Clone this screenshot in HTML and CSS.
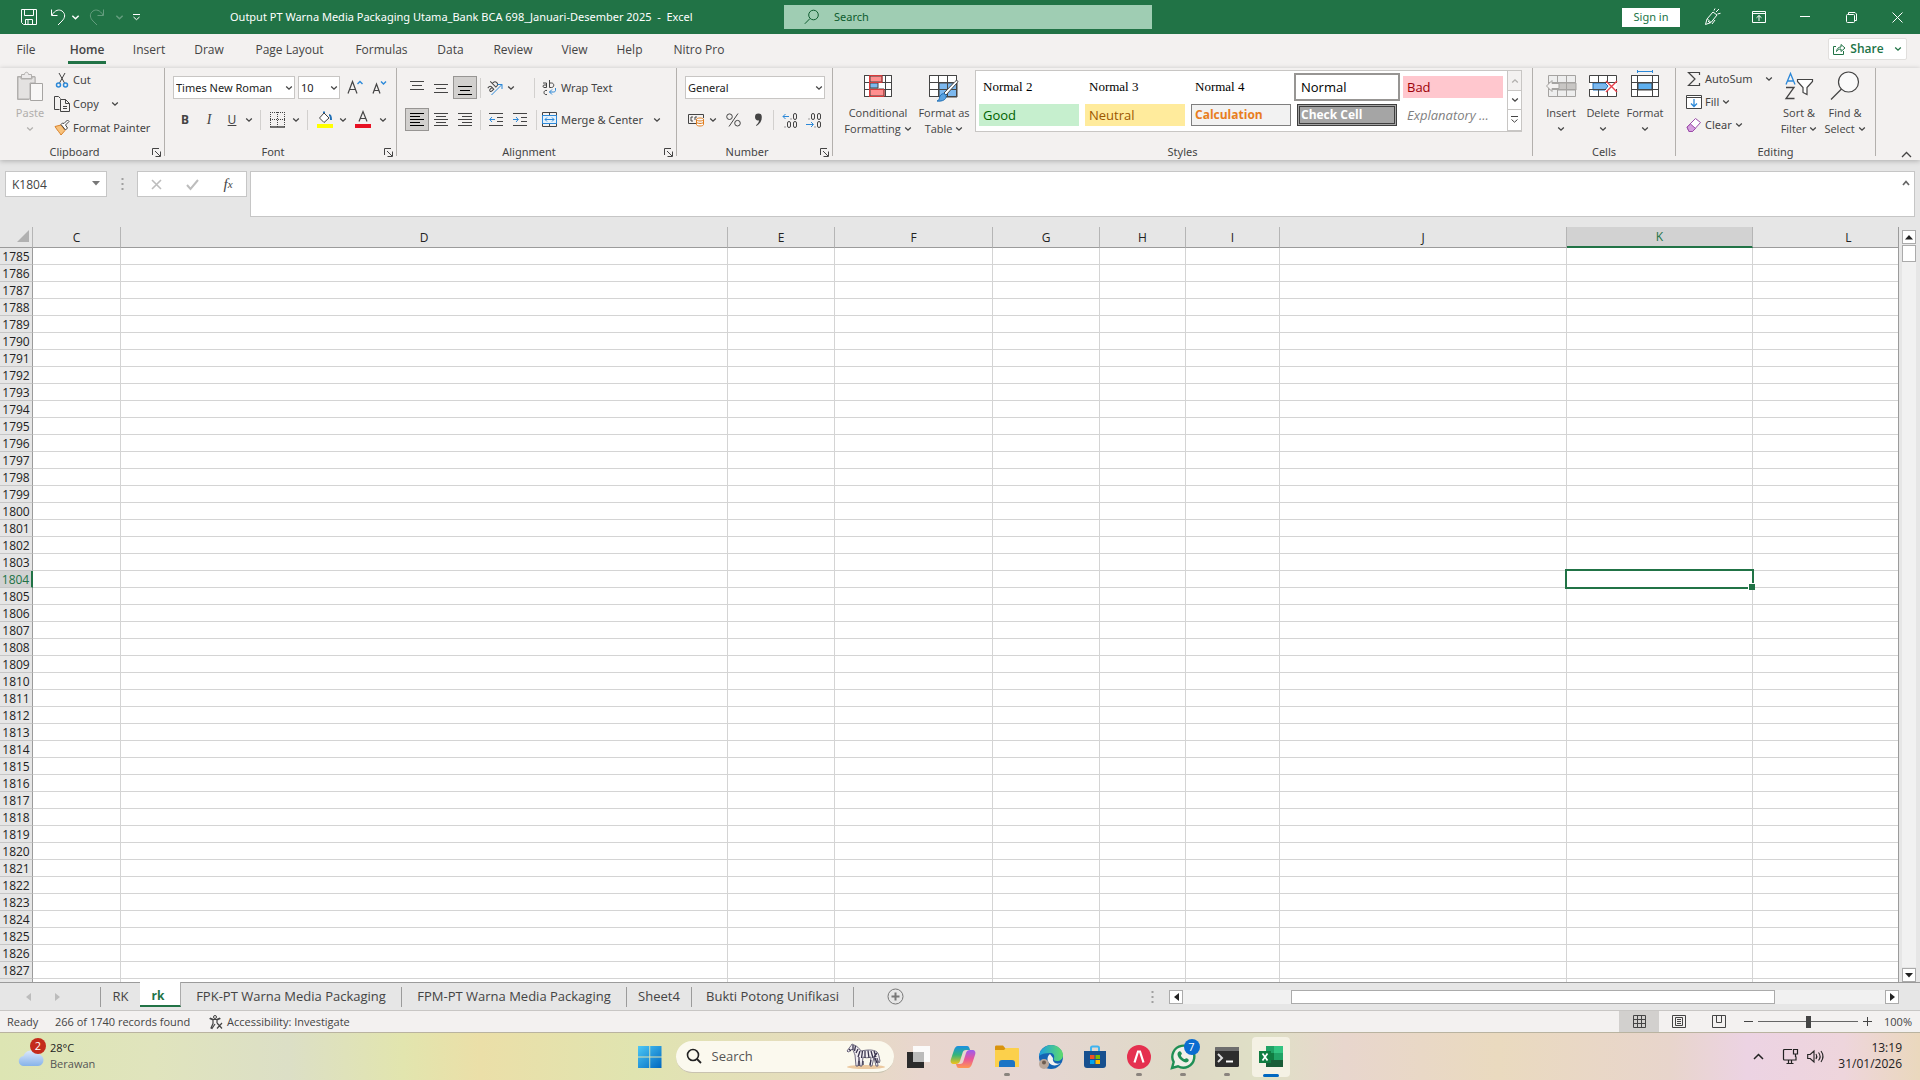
FILE: index.html
```html
<!DOCTYPE html>
<html lang="en">
<head>
  <meta charset="UTF-8" />
  <meta name="viewport" content="width=device-width, initial-scale=1.0"/>
  <title>Output PT Warna Media Packaging Utama - Excel</title>
  <link rel="stylesheet" href="styles.css">
</head>
<body>
  <svg class="defs" aria-hidden="true">
    <symbol id="chev" viewBox="0 0 8 8"><path d="M1.2 2.5 4 5.2 6.8 2.5" fill="none" stroke="currentColor" stroke-width="1.3"/></symbol>
    <symbol id="launch" viewBox="0 0 9 9"><path d="M.5 7V.5H7M3 3l5 5M8.500 3.500v5h-5" fill="none" stroke="currentColor"/></symbol>
  </svg>

  <header class="titlebar">
    <div class="title-left">
      <div class="quick">
        <button class="w34" aria-label="Save"><svg width="18" height="18" viewBox="0 0 18 18"><path d="M1.500 1.500h15v15H3.500l-2-2zM4.500 1.500v6h9v-6M5.500 16.500v-5h7v5M8 12v4"/></svg></button>
        <button class="w24" aria-label="Undo"><svg width="16" height="18" viewBox="0 0 16 18"><path d="M1.500 1.500v6h6M2 7C5 2 9 1 12 3c4 3 3 7 0 10l-4 4"/></svg></button>
        <button class="w10" aria-label="Undo list"><svg width="9" height="9"><use href="#chev"/></svg></button>
        <button class="w34 faded" aria-label="Redo"><svg width="16" height="18" viewBox="0 0 16 18"><path d="M14.500 1.500v6h-6M14 7C11 2 7 1 4 3c-4 3-3 7 0 10l4 4"/></svg></button>
        <button class="w10 faded" aria-label="Redo list"><svg width="9" height="9"><use href="#chev"/></svg></button>
        <button class="w24" aria-label="Customize toolbar"><svg width="9" height="8" viewBox="0 0 9 8"><path d="M1 1.500h7M1.500 4l3 2.700L7.500 4"/></svg></button>
      </div>
      <h1>Output PT Warna Media Packaging Utama_Bank BCA 698_Januari-Desember 2025&nbsp; -&nbsp; Excel</h1>
    </div>
    <label class="title-search">
      <svg width="16" height="16" viewBox="0 0 16 16"><circle cx="9.500" cy="6" r="4.800"/><path d="M6 9.500.8 14.800"/></svg>
      <input type="text" placeholder="Search" aria-label="Search">
    </label>
    <div class="title-right">
      <button class="signin">Sign in</button>
      <button aria-label="Coming soon"><svg width="18" height="18" viewBox="0 0 18 18"><path d="M1.500 16.500 3 11l6-7 4 3-6 7.500-5.500 2zM3.500 11l3 3M6 15l-2-2M10 2.500l1-2M12 4l3-3M13.500 6l3-.7M11 12l-3 4"/></svg></button>
      <button aria-label="Ribbon display options"><svg width="14" height="12" viewBox="0 0 14 12"><path d="M.5.500h13v11H.500zM.500 2.500h13M7 10V4.500M4.500 6.800 7 4.500l2.500 2.300"/></svg></button>
      <button aria-label="Minimize"><svg width="10" height="10" viewBox="0 0 10 10"><path d="M0 4.500h10"/></svg></button>
      <button aria-label="Restore"><svg width="11" height="11" viewBox="0 0 11 11"><rect x=".5" y="2.500" width="8" height="8" rx="1"/><path d="M2.500 2.500v-2h6.500l1.500 1.500v6.500h-2"/></svg></button>
      <button aria-label="Close"><svg width="11" height="11" viewBox="0 0 11 11"><path d="m.5.500 10 10M10.500.500l-10 10"/></svg></button>
    </div>
  </header>

  <div class="tabsbar">
    <nav class="tabs">
      <button>File</button>
      <button class="active"><span>Home</span></button>
      <button>Insert</button>
      <button>Draw</button>
      <button>Page Layout</button>
      <button>Formulas</button>
      <button>Data</button>
      <button>Review</button>
      <button>View</button>
      <button>Help</button>
      <button>Nitro Pro</button>
    </nav>
    <button class="share">
      <svg width="13" height="12" viewBox="0 0 13 12"><path d="M3 3.500H.500v8h10V8M3.500 8.500C4 5.500 5.500 4 8 4V1.500l4 3.500-4 3.500V6C6 6 4.500 7 3.500 8.500z"/></svg>
      Share
      <svg width="8" height="8"><use href="#chev"/></svg>
    </button>
  </div>

  <div class="ribbon">
    <section class="group clipboard">
      <div class="body">
        <button class="big paste" disabled>
          <svg width="28" height="31" viewBox="0 0 28 31"><path d="M5 5.500H1.500v23H13M19 12V5.500h-4M5.500 3.500h3c0-3 4-3 4 0h3v4h-10z" fill="#eceaea" stroke="#b1afad"/><path d="M2 6h3v2h11V6h3v6h-5v16H2z" fill="#e4e2e1"/><path d="M14.500 12.500h12v17h-12z" fill="#f8f7f6" stroke="#a6a4a2"/></svg>
          <span>Paste</span>
          <svg width="8" height="8"><use href="#chev"/></svg>
        </button>
        <div class="stack">
          <button><svg width="16" height="16" viewBox="0 0 16 16"><path d="M5 1l5.500 10M11 1 5.500 11" stroke="#444"/><circle cx="4.500" cy="13" r="2" stroke="#2b88d8" stroke-width="1.500"/><circle cx="11.500" cy="13" r="2" stroke="#2b88d8" stroke-width="1.500"/></svg>Cut</button>
          <button><svg width="16" height="16" viewBox="0 0 16 16"><path d="M5.500 13.500h-5V.500h4l2 2M6.500 3.500h5l4 4v8h-9zM11.500 3.500v4h4M9 10.500h4M9 12.500h4"/></svg>Copy<svg class="gap" width="8" height="8"><use href="#chev"/></svg></button>
          <button><svg width="16" height="16" viewBox="0 0 16 16"><path d="M1 6.500 7 5l4 5.500L7 15c-1-2-4-5-6-8.500z" fill="#f8c27c" stroke="#d9822b"/><path d="M7 4.500 11.500 10l2-2-2-3 3.500-3.500-1.500-1.500L10 3.500 8.500 3z" fill="#fff" stroke="#444"/></svg>Format Painter</button>
        </div>
      </div>
      <h2>Clipboard</h2>
      <button class="launcher" aria-label="Clipboard settings"><svg width="9" height="9"><use href="#launch"/></svg></button>
    </section>

    <section class="group font">
      <div class="body rows">
        <div class="row">
          <div class="combo w122"><select aria-label="Font"><option>Times New Roman</option></select><svg width="8" height="8"><use href="#chev"/></svg></div>
          <div class="combo w42"><select aria-label="Font size"><option>10</option></select><svg width="8" height="8"><use href="#chev"/></svg></div>
          <button class="w24" aria-label="Increase font size"><svg width="16" height="16" viewBox="0 0 16 16"><path d="m1 13.500 4.500-12 4.500 12M2.700 9.500h5.600" stroke-width="1.200"/><path d="M10.500 4 13 1.500 15.500 4" stroke="#2b88d8" stroke-width="1.400"/></svg></button>
          <button class="w24" aria-label="Decrease font size"><svg width="16" height="16" viewBox="0 0 16 16"><path d="m2 13.500 3.500-9.500L9 13.500M3.500 10.500h4" stroke-width="1.200"/><path d="M10 1.500 12.500 4 15 1.500" stroke="#2b88d8" stroke-width="1.400"/></svg></button>
        </div>
        <div class="row">
          <button class="w24 bold">B</button>
          <button class="w24 ital">I</button>
          <button class="w22 under">U</button>
          <button class="w12" aria-label="Underline styles"><svg width="8" height="8"><use href="#chev"/></svg></button>
          <i class="sep"></i>
          <button class="w24" aria-label="Borders"><svg width="16" height="16" viewBox="0 0 16 16"><path d="M.5 0v15M7.500 0v15M14.500 0v15M0 .5h15M0 7.500h15" stroke-dasharray="1 1"/><path d="M0 15h15" stroke-width="1.500"/></svg></button>
          <button class="w12" aria-label="Border styles"><svg width="8" height="8"><use href="#chev"/></svg></button>
          <i class="sep"></i>
          <button class="w24" aria-label="Fill color"><svg width="16" height="18" viewBox="0 0 16 18"><path d="m7 2 5 5-5 4.500L2.500 7z" fill="#fff"/><path d="M7 2V.500M12 4c1.500 0 2 1 2 5" stroke="#1f6fb5" stroke-width="2"/><path d="M0 13h16v4H0z" fill="#ff0" stroke="none"/></svg></button>
          <button class="w12" aria-label="Fill colors"><svg width="8" height="8"><use href="#chev"/></svg></button>
          <button class="w28" aria-label="Font color"><svg width="16" height="18" viewBox="0 0 16 18"><path d="m4 10.500 4-10 4 10M5.300 7.500h5.400" stroke-width="1.200"/><path d="M0 13h16v4H0z" fill="#e81123" stroke="none"/></svg></button>
          <button class="w12" aria-label="Font colors"><svg width="8" height="8"><use href="#chev"/></svg></button>
        </div>
      </div>
      <h2>Font</h2>
      <button class="launcher" aria-label="Font settings"><svg width="9" height="9"><use href="#launch"/></svg></button>
    </section>

    <section class="group align">
      <div class="body rows">
        <div class="row">
          <button class="w24" aria-label="Top align"><svg width="14" height="14" viewBox="0 0 14 14"><path d="M0 .5h14M2 4.500h10M0 8.500h14"/></svg></button>
          <button class="w24" aria-label="Middle align"><svg width="14" height="14" viewBox="0 0 14 14"><path d="M0 3.500h14M2 7.500h10M0 11.500h14"/></svg></button>
          <button class="w24 on" aria-label="Bottom align"><svg width="14" height="14" viewBox="0 0 14 14"><path d="M0 5.500h14M2 9.500h10M0 13.500h14"/></svg></button>
          <i class="sep"></i>
          <button class="w22" aria-label="Orientation"><svg width="18" height="16" viewBox="0 0 18 16"><g transform="rotate(-45 6 6)"><path d="M1.500 4.500h2c1 0 1.500.5 1.500 1.500v3.500H2.500c-2 0-2-2.500 0-2.500H5M8 1.500v8h1.500c3 0 3-5 0-5H8"/></g><path d="M5.500 15 16 4.500M11.500 4.500H16V9" stroke="#2b88d8"/></svg></button>
          <button class="w10" aria-label="Orientations"><svg width="8" height="8"><use href="#chev"/></svg></button>
          <i class="sep wide"></i>
          <button class="labelled"><svg width="15" height="16" viewBox="0 0 15 16"><path d="M1 3h3.500v4.500H2a1.300 1.300 0 0 1 0-2.500h2.500M7.500 0v7.500h2c3 0 3-4.500 0-4.500h-2M5 10.500c-4-1-4 5 0 4"/><path d="M13.500 8v2.500c0 1-1 1.500-2 1.500H7.500M10 9.500 7.500 12l2.500 2.500" stroke="#2b88d8"/></svg>Wrap Text</button>
        </div>
        <div class="row">
          <button class="w24 on" aria-label="Align left"><svg width="14" height="14" viewBox="0 0 14 14"><path d="M0 .5h14M0 3.500h10M0 6.500h14M0 9.500h10M0 12.500h14"/></svg></button>
          <button class="w24" aria-label="Center"><svg width="14" height="14" viewBox="0 0 14 14"><path d="M0 .5h14M2 3.500h10M0 6.500h14M2 9.500h10M0 12.500h14"/></svg></button>
          <button class="w24" aria-label="Align right"><svg width="14" height="14" viewBox="0 0 14 14"><path d="M0 .5h14M4 3.500h10M0 6.500h14M4 9.500h10M0 12.500h14"/></svg></button>
          <i class="sep"></i>
          <button class="w24" aria-label="Decrease indent"><svg width="14" height="14" viewBox="0 0 14 14"><path d="M0 .5h14M8 4.500h6M8 8.500h6M0 12.500h14"/><path d="M6 6.500H.800M3 4 .700 6.500 3 9" stroke="#2b88d8"/></svg></button>
          <button class="w24" aria-label="Increase indent"><svg width="14" height="14" viewBox="0 0 14 14"><path d="M0 .5h14M8 4.500h6M8 8.500h6M0 12.500h14"/><path d="M0 6.500h5.200M3 4l2.300 2.500L3 9" stroke="#2b88d8"/></svg></button>
          <i class="sep snug"></i>
          <button class="labelled"><svg width="15" height="15" viewBox="0 0 15 15"><path d="M.5.500h14v14H.500zM.500 3.500h14M.500 11.500h14M7.500 0v3M7.500 12v3"/><path d="M.5 3.500h14v8H.500z" fill="#e5f1fb" stroke="#2b88d8"/><path d="M3 7.500h9M5 5.500l-2 2 2 2M10 5.500l2 2-2 2" stroke="#2b88d8"/></svg>Merge &amp; Center</button>
          <button class="w28" aria-label="Merge options"><svg width="8" height="8"><use href="#chev"/></svg></button>
        </div>
      </div>
      <h2>Alignment</h2>
      <button class="launcher" aria-label="Alignment settings"><svg width="9" height="9"><use href="#launch"/></svg></button>
    </section>

    <section class="group number">
      <div class="body rows">
        <div class="row">
          <div class="combo w140"><select aria-label="Number format"><option>General</option></select><svg width="8" height="8"><use href="#chev"/></svg></div>
        </div>
        <div class="row">
          <button class="w22" aria-label="Accounting format"><svg width="17" height="14" viewBox="0 0 17 14"><path d="M8 10.500H.500v-9h15V5M5 4H3v4h2M9 4H7v3" /><path d="M8.500 6.500c0-2 7-2 7 0v5c0 2-7 2-7 0zM8.500 6.500c0 2 7 2 7 0M8.500 9c0 2 7 2 7 0" fill="#fff" stroke="#e07c1c"/></svg></button>
          <button class="w12" aria-label="Currencies"><svg width="8" height="8"><use href="#chev"/></svg></button>
          <button class="w28" aria-label="Percent"><svg width="15" height="14" viewBox="0 0 15 14"><circle cx="3.500" cy="3.700" r="2.800"/><circle cx="11.500" cy="10.200" r="2.800"/><path d="M12 .5 3 13.500"/></svg></button>
          <button class="w22" aria-label="Comma"><svg width="9" height="14" viewBox="0 0 9 14"><path d="M1 4a3.200 3.200 0 0 1 6.800 0c.2 4-2 7-5.300 9l-.5-.8C4 10.500 5 9 5 7.300 3 8 1 6.500 1 4z" fill="#444" stroke="none"/></svg></button>
          <i class="sep"></i>
          <button class="w24" aria-label="Increase decimal"><svg width="16" height="16" viewBox="0 0 16 16"><path d="M7 4.500H1M3.500 2 1 4.500 3.500 7" stroke="#2b88d8"/><path d="M9 6.500v1"/><rect x="11.500" y="1.500" width="3" height="6" rx="1.500"/><rect x="5.500" y="9.500" width="3" height="6" rx="1.500"/><rect x="11.500" y="9.500" width="3" height="6" rx="1.500"/><path d="M3 14.500v1"/></svg></button>
          <button class="w24" aria-label="Decrease decimal"><svg width="16" height="16" viewBox="0 0 16 16"><path d="M0 12.500h7M5 10l2.500 2.500L5 15" stroke="#2b88d8"/><path d="M3 6.500v1"/><rect x="5.500" y="1.500" width="3" height="6" rx="1.500"/><rect x="11.500" y="1.500" width="3" height="6" rx="1.500"/><rect x="11.500" y="9.500" width="3" height="6" rx="1.500"/><path d="M9 14.500v1"/></svg></button>
        </div>
      </div>
      <h2>Number</h2>
      <button class="launcher" aria-label="Number settings"><svg width="9" height="9"><use href="#launch"/></svg></button>
    </section>

    <section class="group styles">
      <div class="body">
        <button class="big w66"><svg width="28" height="31" viewBox="0 0 28 31"><path d="M.5 4.500h27v21H.500z" fill="#fff"/><path d="M6 5h12v6H6zM6 18h14v7H6z" fill="#ff8f8f"/><path d="M6 12h8v5H6z" fill="#7cb8ee"/><path d="M.5 4.500h27v21H.500zM.500 11.500h27M.500 18.500h27M21.500 5v20"/><path d="M5.500 4.500V26M5.500 4.500H18v7H5.500M5.500 18.500H20v7H5.500" stroke="#d83b3b"/></svg><span>Conditional<br>Formatting <svg width="8" height="8"><use href="#chev"/></svg></span></button>
        <button class="big w66"><svg width="30" height="31" viewBox="0 0 30 31"><path d="M.5 4.500h27v21H.500z" fill="#fff"/><path d="M10 12h18v14H10z" fill="#7cb8ee"/><path d="M.5 4.500h27v21H.500zM.500 11.500h27M.500 18.500h27M9.500 5v20M18.500 5v20"/><path d="M28 12 17 24l-2-2L26 10.500c2-2 4-.5 2 1.500z" fill="#fff"/><path d="M16 23c3 3 0 8-8 7 3-1 2-3 3-5 1-1.800 3-3 5-2z" fill="#5aa2e0" stroke="#1f6fb5"/></svg><span>Format as<br>Table <svg width="8" height="8"><use href="#chev"/></svg></span></button>
        <div class="gallery">
          <div class="cells">
            <button class="serif">Normal 2</button>
            <button class="serif">Normal 3</button>
            <button class="serif">Normal 4</button>
            <button class="picked">Normal</button>
            <button class="bad">Bad</button>
            <button class="good">Good</button>
            <button class="neutral">Neutral</button>
            <button class="calc">Calculation</button>
            <button class="check">Check Cell</button>
            <button class="expl">Explanatory ...</button>
          </div>
          <div class="scroll">
            <button aria-label="Up" disabled><svg class="flip" width="8" height="8"><use href="#chev"/></svg></button>
            <button aria-label="Down"><svg width="8" height="8"><use href="#chev"/></svg></button>
            <button aria-label="More"><svg width="9" height="8" viewBox="0 0 9 8"><path d="M1 .500h7M1.500 3.500l3 2.700 3-2.700"/></svg></button>
          </div>
        </div>
      </div>
      <h2>Styles</h2>
    </section>

    <section class="group cellsgrp">
      <div class="body">
        <button class="big w42"><svg width="32" height="31" viewBox="0 0 32 31"><g stroke="#a5a3a1"><path d="M3.500 4.500h27v21h-27z" fill="#eee"/><path d="M12 12h19v7H12z" fill="#c8c6c4"/><path d="M3.500 11.500h27M3.500 18.500h27M12.500 5v20M21.500 5v20"/><path d="M1.500 15 7 9.500v3h7v5H7v3z" fill="#f3f1f0"/></g></svg><span>Insert</span><svg width="8" height="8"><use href="#chev"/></svg></button>
        <button class="big w42"><svg width="32" height="31" viewBox="0 0 32 31"><path d="M2.500 4.500h27v21h-27z" fill="#fff" stroke="none"/><path d="M6 12h12l3 3-3 4H6z" fill="#7cb8ee" stroke="#1f6fb5"/><path d="M2.500 12V4.500h27V12M2.500 18v7.500h27V18M3 11.500h27M3 18.500h16M11.500 5v6M20.500 5v6M11.500 19v6M20.500 19v6"/><path d="m19 10 11 11M30 10 19 21" stroke="#e8404a" stroke-width="1.400"/></svg><span>Delete</span><svg width="8" height="8"><use href="#chev"/></svg></button>
        <button class="big w42"><svg width="28" height="31" viewBox="0 0 28 31"><path d="M.5 4.500h27v21H.500z" fill="#fff"/><path d="M7 12h14v7H7z" fill="#5fb0f0"/><path d="M.5 4.500h27v21H.500zM.500 11.500h27M.500 18.500h27M6.500 5v20M21.500 5v20"/><path d="M6.500-1v3M21.500-1v3M6 .5h15" stroke="#2b88d8"/></svg><span>Format</span><svg width="8" height="8"><use href="#chev"/></svg></button>
      </div>
      <h2>Cells</h2>
    </section>

    <section class="group editing">
      <div class="body">
        <div class="stack">
          <button><svg width="16" height="16" viewBox="0 0 16 16"><path d="M13.500 4V1.500H2.500L9 8l-6.500 6.500h11V12" stroke-width="1.200"/></svg>AutoSum<svg class="gap" width="8" height="8"><use href="#chev"/></svg></button>
          <button><svg width="16" height="16" viewBox="0 0 16 16"><path d="M.5 1.500h15v13H.500zM.500 3.500h15" fill="#fff"/><path d="M8 5v7.500M5 9.500l3 3 3-3" stroke="#2b88d8" stroke-width="1.300"/></svg>Fill<svg width="8" height="8"><use href="#chev"/></svg></button>
          <button><svg width="16" height="16" viewBox="0 0 16 16"><path d="M1 10 9.500 1.500l5 4L6.500 14.500H3z" fill="#fff" stroke="#9a4ba8"/><path d="M1 10l3.500-3 5 4.500-3 3H3z" fill="#d6a0df" stroke="#9a4ba8"/></svg>Clear<svg width="8" height="8"><use href="#chev"/></svg></button>
        </div>
        <button class="big w46"><svg width="30" height="31" viewBox="0 0 30 31"><path d="m2 13.500 4.500-11 4.500 11M3.500 10h6" stroke="#2b88d8" stroke-width="1.300"/><path d="M2 16.500h8L2 27.500h8.500" stroke-width="1.300"/><path d="M13.500 8.500h15v2l-5.500 6v7l-4-2v-5l-5.500-6z" fill="#fff" stroke-width="1.200"/></svg><span>Sort &amp;<br>Filter <svg width="8" height="8"><use href="#chev"/></svg></span></button>
        <button class="big w46"><svg width="30" height="31" viewBox="0 0 30 31"><circle cx="18.500" cy="11" r="10" fill="#fafafa" stroke-width="1.200"/><path d="M11.500 18 1 28.500" stroke-width="1.300"/></svg><span>Find &amp;<br>Select <svg width="8" height="8"><use href="#chev"/></svg></span></button>
      </div>
      <h2>Editing</h2>
    </section>
    <button class="collapse" aria-label="Collapse ribbon"><svg width="11" height="7" viewBox="0 0 11 7"><path d="m1 6 4.500-4.500L10 6" stroke-width="1.300"/></svg></button>
  </div>

  <div class="formulabar">
    <div class="namebox"><input type="text" value="K1804" aria-label="Name box"><svg width="8" height="5" viewBox="0 0 8 5"><path d="M0 0h8L4 4.500z" fill="#777" stroke="none"/></svg></div>
    <svg class="grip" width="3" height="12" viewBox="0 0 3 12"><path d="M.5 1h2M.5 6h2M.5 11h2" stroke="#a0a0a0" stroke-width="2"/></svg>
    <div class="fxbox">
      <button aria-label="Cancel" disabled><svg width="11" height="11" viewBox="0 0 11 11"><path d="m1 1 9 9M10 1l-9 9" stroke="#bdbdbd" stroke-width="1.600"/></svg></button>
      <button aria-label="Enter" disabled><svg width="13" height="11" viewBox="0 0 13 11"><path d="m1 6 3.500 4L12 1" stroke="#bdbdbd" stroke-width="2"/></svg></button>
      <button class="fx"><em>f</em><sub>x</sub></button>
    </div>
    <div class="formula"><textarea aria-label="Formula"></textarea><svg width="8" height="6" viewBox="0 0 8 6"><path d="m1 5 3-3.500L7 5" stroke="#666" stroke-width="1.700"/></svg></div>
  </div>

  <main class="sheet">
    <div class="gridwrap">
      <table class="grid">
        <colgroup>
          <col class="c-head"><col class="c-c"><col class="c-d"><col class="c-e"><col class="c-f"><col class="c-g"><col class="c-h"><col class="c-i"><col class="c-j"><col class="c-k"><col>
        </colgroup>
        <thead>
          <tr>
            <th class="corner"><svg width="12" height="12" viewBox="0 0 12 12"><path d="M12 0v12H0z" fill="#b1b1b1" stroke="none"/></svg></th>
            <th>C</th><th>D</th><th>E</th><th>F</th><th>G</th><th>H</th><th>I</th><th>J</th><th class="sel">K</th><th class="last">L</th>
          </tr>
        </thead>
        <tbody id="rows"></tbody>
      </table>
    </div>
    <div class="vscroll">
      <button aria-label="Scroll up"><svg width="8" height="5" viewBox="0 0 8 5"><path d="M0 4.500h8L4 0z" fill="#222" stroke="none"/></svg></button>
      <div class="track"><div class="thumb"></div></div>
      <button aria-label="Scroll down"><svg width="8" height="5" viewBox="0 0 8 5"><path d="M0 0h8L4 4.500z" fill="#222" stroke="none"/></svg></button>
    </div>
  </main>

  <div class="sheetbar">
    <div class="sheetnav">
      <button aria-label="Previous sheets" disabled><svg width="5" height="8" viewBox="0 0 5 8"><path d="M5 0v8L0 4z" fill="#bcbcbc" stroke="none"/></svg></button>
      <button aria-label="Next sheets" disabled><svg width="5" height="8" viewBox="0 0 5 8"><path d="M0 0v8l5-4z" fill="#bcbcbc" stroke="none"/></svg></button>
    </div>
    <div class="sheets">
      <button class="bare">RK</button>
      <button class="current">rk</button>
      <button>FPK-PT Warna Media Packaging</button>
      <button>FPM-PT Warna Media Packaging</button>
      <button>Sheet4</button>
      <button>Bukti Potong Unifikasi</button>
    </div>
    <button class="add" aria-label="New sheet"><svg width="17" height="17" viewBox="0 0 17 17"><circle cx="8.500" cy="8.500" r="7.500" stroke="#777"/><path d="M8.500 4.500v8M4.500 8.500h8" stroke="#777" stroke-width="2"/></svg></button>
    <svg class="grip" width="3" height="12" viewBox="0 0 3 12"><path d="M.5 1h2M.5 6h2M.5 11h2" stroke="#a0a0a0" stroke-width="2"/></svg>
    <div class="hscroll">
      <button aria-label="Scroll left"><svg width="5" height="8" viewBox="0 0 5 8"><path d="M5 0v8L0 4z" fill="#222" stroke="none"/></svg></button>
      <div class="track"><div class="thumb"></div></div>
      <button aria-label="Scroll right"><svg width="5" height="8" viewBox="0 0 5 8"><path d="M0 0v8l5-4z" fill="#222" stroke="none"/></svg></button>
    </div>
  </div>

  <div class="status">
    <span class="ready">Ready</span>
    <span class="found">266 of 1740 records found</span>
    <button class="access"><svg width="14" height="14" viewBox="0 0 14 14"><circle cx="6" cy="2" r="1.500"/><path d="M.5 3.500 4 5v3.500l-2 4.500 1 .500L6 9M11.500 3.500 8 5v3M1 3l3.500 1.500h3L11 3M8 8l5 5.500M13 8l-5 5.500" stroke-width="1.200"/></svg>Accessibility: Investigate</button>
    <div class="views">
      <button class="on" aria-label="Normal view"><svg width="13" height="13" viewBox="0 0 13 13"><path d="M.5.500h12v12H.500zM.500 4.500h12M.500 8.500h12M4.500 0v13M8.500 0v13"/></svg></button>
      <button aria-label="Page layout view"><svg width="14" height="13" viewBox="0 0 14 13"><path d="M.5.500h13v12H.500zM3.500 2.500h7v8h-7zM5 4.500h4M5 6.500h4M5 8.500h4"/></svg></button>
      <button aria-label="Page break view"><svg width="14" height="13" viewBox="0 0 14 13"><path d="M.5.500h13v12H.500zM4.500 0v7.500M9.500 0v7.500M4.500 7.500h5"/></svg></button>
    </div>
    <button class="step" aria-label="Zoom out"><svg width="9" height="9" viewBox="0 0 9 9"><path d="M0 4.500h9"/></svg></button>
    <input class="zoom" type="range" min="0" max="100" value="50" aria-label="Zoom">
    <button class="step" aria-label="Zoom in"><svg width="9" height="9" viewBox="0 0 9 9"><path d="M0 4.500h9M4.500 0v9"/></svg></button>
    <span class="pct">100%</span>
  </div>

  <footer class="taskbar">
    <button class="weather">
      <span class="cloud">
        <svg width="26" height="20" viewBox="0 0 26 20"><defs><linearGradient id="cl" x2="0" y2="1"><stop stop-color="#dbe8fb"/><stop offset="1" stop-color="#86b3ea"/></linearGradient></defs><path d="M6 18a5 5 0 0 1-.5-10A7.500 7.500 0 0 1 19 6a6 6 0 0 1 1 12z" fill="url(#cl)" stroke="none"/></svg>
        <b class="badge">2</b>
      </span>
      <span>28°C<br><small>Berawan</small></span>
    </button>
    <div class="apps">
      <button aria-label="Start"><svg width="24" height="24" viewBox="0 0 24 24"><defs><linearGradient id="win" x2="1" y2="1"><stop stop-color="#4cc8f5"/><stop offset="1" stop-color="#0067c0"/></linearGradient></defs><path d="M0 1h11.300v10.500H0zM12.200 1H23.500v10.500H12.200zM0 12.500h11.300V23H0zM12.200 12.500h11.300V23H12.200z" fill="url(#win)" stroke="none"/></svg></button>
      <label class="tasksearch">
        <svg width="16" height="16" viewBox="0 0 16 16"><circle cx="7" cy="7" r="5.500" stroke="#222" stroke-width="1.600"/><path d="m11 11 4 4" stroke="#222" stroke-width="1.800"/></svg>
        <input type="text" placeholder="Search" aria-label="Search Windows">
        <svg width="40" height="26" viewBox="0 0 40 26">
          <ellipse cx="20" cy="24" rx="19" ry="2" fill="#ecc9a0" stroke="none"/>
          <path d="M1 8c2-3 4-5 5-7l2 1c3 1 5 3 7 6 5-1 12-2 16 1 2 2 2 5 3 9l-1 2-2-5 1 8h-2l-2-9-2 9h-2l1-9c-3 1-6 1-8 0l-1 9h-2l-1-9-1 9h-2l-1-11c-1-2-1-4-3-6-1 1-3 3-4 3z" fill="#f2eef2" stroke="#4a4560" stroke-width=".8"/>
          <path d="M7 2v5M9.500 3 8.500 8M12 6l-2 4M14 8l-2 6M16.500 8l-1 7M19 8v7M22 7.500l1 7.500M25 8l2 7M28 8l2 6M31 10l-3 4M13 18v5M17 18v4M25 17l-1 5M29 15l2 5M3 6l2 2" stroke="#37324c" stroke-width="1.300"/>
        </svg>
      </label>
      <button aria-label="Task view"><svg width="24" height="24" viewBox="0 0 24 24"><path d="M6 1h17v16H6z" fill="#fbfafa" stroke="none"/><path d="M0 7h17v16H0z" fill="#2b2b2b" stroke="none"/><path d="M6 7h11v10H6z" fill="#bbb" stroke="none"/></svg></button>
      <button aria-label="Copilot"><svg width="26" height="24" viewBox="0 0 26 24"><defs><linearGradient id="co1" x2="0" y2="1"><stop stop-color="#1a8fe3"/><stop offset=".5" stop-color="#35b57a"/><stop offset="1" stop-color="#f2c21b"/></linearGradient><linearGradient id="co2" x2="0" y2="1"><stop stop-color="#9a5cf0"/><stop offset=".5" stop-color="#e8569a"/><stop offset="1" stop-color="#ff9850"/></linearGradient></defs><path d="M8 1h9c2 0 2 1 3 4h-4c-2 0-3 1-3.500 3L10 16c-.5 2-2 3-4 3H4c-3 0-4-2-3-5L4 5c.7-2 2-4 4-4z" fill="url(#co1)" stroke="none"/><path d="M18 23H9c-2 0-2-1-3-4h4c2 0 3-1 3.500-3L16 8c.5-2 2-3 4-3h2c3 0 4 2 3 5l-3 9c-.7 2-2 4-4 4z" fill="url(#co2)" stroke="none"/></svg></button>
      <button class="run" aria-label="File Explorer"><svg width="26" height="24" viewBox="0 0 26 24"><path d="M1 2c0-1 .5-1.500 1.500-1.500H9l2.500 3V8H1z" fill="#d9930d" stroke="none"/><path d="M1 5h9l2-2h12c.8 0 1 .5 1 1v18H1z" fill="#fcd04b" stroke="none"/><path d="M5 22v-4c0-2 1-3 3-3h10c2 0 3 1 3 3v4z" fill="#1b74c5" stroke="none"/></svg></button>
      <button aria-label="Edge"><svg width="26" height="24" viewBox="0 0 26 24"><defs><linearGradient id="ed"><stop stop-color="#1b9de2"/><stop offset="1" stop-color="#5fdc6a"/></linearGradient></defs><circle cx="13" cy="12" r="12" fill="#1464b4" stroke="none"/><path d="M1 11C2 4 8 0 13 0c7 0 12 5 12 10 0 4-3 6-6 6s-4-1-3-3c1-3-1-5-4-5C7 8 3 9 1 11z" fill="url(#ed)" stroke="none"/><path d="M12 9c-4 3-3 9 2 11 3 1 6 0 9-2-5 2-9-1-8-5z" fill="#f3f1f0" stroke="none"/><circle cx="6" cy="19" r="5" fill="#b9a79a" stroke="none"/><circle cx="6" cy="17.500" r="2" fill="#6d5c50" stroke="none"/></svg></button>
      <button aria-label="Store"><svg width="24" height="24" viewBox="0 0 24 24"><path d="M8 7V3c0-1 .5-1.500 1.500-1.500h5c1 0 1.500.5 1.500 1.500v4" stroke="#3fb4f0" stroke-width="2"/><path d="M1 6h22v14c0 2-1 3-3 3H4c-2 0-3-1-3-3z" fill="#17508f" stroke="none"/><path d="M7 10h4.500v4H7z" fill="#f25022" stroke="none"/><path d="M12.500 10H17v4h-4.500z" fill="#7fba00" stroke="none"/><path d="M7 15h4.500v4H7z" fill="#00a4ef" stroke="none"/><path d="M12.500 15H17v4h-4.500z" fill="#ffb900" stroke="none"/></svg></button>
      <button class="run" aria-label="Accurate"><svg width="24" height="24" viewBox="0 0 24 24"><circle cx="12" cy="12" r="12" fill="#e5304f" stroke="none"/><path d="m7.500 17.500 3.500-11h2l3.500 11" stroke="#fff" stroke-width="2.200"/></svg></button>
      <button class="run" aria-label="WhatsApp"><svg width="26" height="26" viewBox="0 0 26 26"><path d="M2 24l1.700-6A11 11 0 1 1 8 22.300z" fill="#f1efe8" stroke="#1f8f55" stroke-width="2.400"/><path d="M9 7.500c-3 2-1 6 2 8.500s6 3.500 7.500 1c.7-1.300 0-2-2-2.800-1-.4-1.500 1.300-2.500.8-1.500-.8-2.500-2-3-3.200-.3-1 1.300-1.200.8-2.500C11 7.500 10.300 6.800 9 7.500z" fill="#1f8f55" stroke="none"/></svg><b class="badge blue">7</b></button>
      <button class="run" aria-label="Terminal"><svg width="24" height="20" viewBox="0 0 24 20"><rect width="24" height="20" rx="1.500" fill="#2d2d2d" stroke="none"/><path d="M0 1.500C0 .5.500 0 1.500 0H24v4H0z" fill="#6e6e6e" stroke="none"/><path d="m3 7 4 4-4 4" stroke="#ddd" stroke-width="2"/><path d="M11 14.500h7" stroke="#fff" stroke-width="2"/></svg></button>
      <button class="run focus" aria-label="Excel"><svg width="24" height="22" viewBox="0 0 24 22"><path d="M7 0h17v21H7z" fill="#21a366" stroke="none"/><path d="M15 0h9v7h-9z" fill="#33c481" stroke="none"/><path d="M7 7h8v7H7z" fill="#107c41" stroke="none"/><path d="M7 14h17v7H7z" fill="#185c37" stroke="none"/><path d="M0 5h12v12H0z" fill="#107c41" stroke="none"/><path d="m3.500 7.500 5 7M8.500 7.500l-5 7" stroke="#fff" stroke-width="1.700"/></svg></button>
    </div>
    <div class="tray">
      <button aria-label="Hidden icons"><svg width="11" height="7" viewBox="0 0 11 7"><path d="m1 6 4.500-4.500L10 6" stroke="#222" stroke-width="1.500"/></svg></button>
      <button aria-label="Network"><svg width="17" height="17" viewBox="0 0 17 17"><path d="M10 1.500H2.500c-.7 0-1 .3-1 1v8.500c0 .7.3 1 1 1H14V8.500M4.500 15.500h7M6.500 12.500v3M9.500 12.500v3M11.500 1.500h4V6h-4zM13.500 6v3" stroke="#222" stroke-width="1.200"/></svg></button>
      <button aria-label="Volume"><svg width="17" height="15" viewBox="0 0 17 15"><path d="M.7 5.500h2.500L7 2v11L3.200 9.500H.700zM9 5c1 1.500 1 3.500 0 5M11.500 3.500c2 2.500 2 5.500 0 8M14 2c2.500 3.500 2.500 7.500 0 11" stroke="#222" stroke-width="1.100"/></svg></button>
      <button class="clock">13:19<br>31/01/2026</button>
    </div>
  </footer>

  <script>
    const firstRow = 1785;
    const lastRow = 1827;
    const columns = 'CDEFGHIJKL';
    const active = { col: 'K', row: 1804 };

    let html = '';
    for (let r = firstRow; r <= lastRow + 1; r++) {
      const on = r === active.row;
      html += '<tr><th' + (on ? ' class="sel"' : '') + '>' + (r > lastRow ? '' : r) + '</th>';
      for (const c of columns) {
        html += on && c === active.col ? '<td class="active"><span></span></td>' : '<td></td>';
      }
      html += '</tr>';
    }
    document.getElementById('rows').innerHTML = html;
  </script>
</body>
</html>
```
FILE: styles.css
```css
* {
  box-sizing: border-box;
}

body {
  margin: 0;
  height: 100vh;
  display: flex;
  flex-direction: column;
  overflow: hidden;
  background: #e6e6e6;
  color: #444;
  font: 12px/16px "Open Sans", "Noto Sans", sans-serif;
}

button, input, select, textarea {
  font: inherit;
  color: inherit;
  border: 0;
  padding: 0;
  margin: 0;
  background: none;
  border-radius: 0;
  outline: none;
}

button {
  display: flex;
  align-items: center;
  justify-content: center;
  white-space: nowrap;
}

h1, h2 {
  margin: 0;
  font: inherit;
}

svg {
  fill: none;
  stroke: currentColor;
  flex: none;
  overflow: visible;
}

.defs {
  position: absolute;
  width: 0;
  height: 0;
}

.w10 { width: 10px; }
.w12 { width: 12px; }
.w22 { width: 22px; }
.w24 { width: 24px; }
.w28 { width: 28px; }
.w34 { width: 34px; }
.w42 { width: 42px; }
.w46 { width: 46px; }
.w66 { width: 66px; }
.w122 { width: 122px; }
.w140 { width: 140px; }

/* title bar */
.titlebar {
  display: grid;
  grid-template-columns: 49fr 23fr 48fr;
  align-items: center;
  height: 34px;
  flex: none;
  background: #217346;
  color: #fff;
  font-family: "Noto Sans", "Open Sans", sans-serif;
  font-size: 11px;
}

.title-left {
  display: flex;
  align-items: center;
}

.quick {
  display: flex;
  height: 34px;
  padding-left: 12px;
  width: 230px;
}

.quick .faded {
  opacity: 0.3;
}

.titlebar h1 {
  white-space: nowrap;
}

.title-search {
  display: flex;
  align-items: center;
  gap: 14px;
  height: 24px;
  padding: 0 20px;
  background: #9fcdb3;
  color: #0e5c2f;
}

.title-search input {
  flex: 1;
  width: 0;
}

input::placeholder {
  color: inherit;
  opacity: 1;
}

.title-right {
  display: flex;
  justify-content: flex-end;
  align-items: center;
}

.title-right button {
  width: 46px;
  height: 34px;
}

.title-right .signin {
  width: 58px;
  height: 19px;
  margin-right: 10px;
  background: #fff;
  color: #217346;
}

/* ribbon tabs */
.tabsbar {
  display: flex;
  justify-content: space-between;
  align-items: flex-start;
  height: 34px;
  flex: none;
  background: #f3f1f0;
}

.tabs {
  display: grid;
  grid-template-columns: 52px 70px 54px 66px 95px 89px 49px 76px 47px 63px 76px;
  height: 32px;
}

.tabs .active {
  font-weight: 600;
}

.tabs .active span {
  padding: 6px 2px 3px;
  border-bottom: 3px solid #217346;
}

.share {
  width: 79px;
  height: 22px;
  margin: 4px 13px 0 0;
  gap: 4px;
  background: #fff;
  border: 1px solid #e1dfdd;
  border-radius: 2px;
  color: #217346;
  font-weight: 600;
}

.share svg:last-child {
  margin-left: 6px;
}

/* ribbon */
.ribbon {
  position: relative;
  display: flex;
  height: 92px;
  flex: none;
  background: #f3f1f0;
  box-shadow: 0 1px 5px rgba(0, 0, 0, 0.25);
  font-family: "Noto Sans", "Open Sans", sans-serif;
  font-size: 11px;
}

.group {
  position: relative;
  display: flex;
  flex-direction: column;
  justify-content: space-between;
  height: 88px;
  flex: none;
  border-right: 1px solid #b3b0ad;
}

.group h2 {
  height: 12px;
  line-height: 16px;
  text-align: center;
}

.body {
  display: flex;
  height: 70px;
}

.clipboard { width: 165px; }
.font { width: 232px; }
.align { width: 280px; }
.number { width: 156px; }
.styles { width: 700px; }
.cellsgrp { width: 143px; }
.editing { width: 200px; }

.clipboard h2,
.font h2,
.align h2,
.number h2 {
  padding-right: 15px;
}

.launcher {
  position: absolute;
  right: 3px;
  bottom: -1px;
  height: 10px;
}

.big {
  display: flex;
  flex-direction: column;
  justify-content: flex-start;
  text-align: center;
  padding-top: 3px;
  gap: 3px;
}

.big > svg:last-child {
  margin-top: 1px;
}

.styles .big,
.cellsgrp .big,
.editing .big {
  font-family: "Open Sans", "Noto Sans", sans-serif;
}

.paste {
  width: 48px;
  margin-left: 6px;
  color: #b1afad;
}

.stack {
  display: grid;
  grid-template-rows: repeat(3, 24px);
  justify-items: start;
}

.stack button {
  gap: 3px;
}

.stack .gap {
  margin-left: 9px;
}

.rows {
  flex-direction: column;
  gap: 9px;
  padding: 8px 0 0 8px;
}

.row {
  display: flex;
  align-items: center;
  height: 23px;
}

.row button {
  flex: none;
  height: 23px;
}

.row .on {
  background: #d2d0ce;
  box-shadow: inset 0 0 0 1px #979593;
  color: #000;
}

.combo {
  position: relative;
  margin-right: 3px;
}

.combo select {
  appearance: none;
  width: 100%;
  height: 23px;
  padding-left: 2px;
  border: 1px solid #c8c6c4;
  background: #fff;
  color: #222;
}

.combo svg {
  position: absolute;
  right: 2px;
  top: 8px;
  pointer-events: none;
}

.row .bold {
  font-size: 12px;
  font-weight: 700;
}

.row .ital {
  font-family: "Liberation Serif", serif;
  font-size: 14px;
  font-style: italic;
}

.row .under {
  font-size: 12px;
  text-decoration: underline;
}

.sep {
  width: 1px;
  height: 20px;
  margin: 0 4px;
  background: #d2d0ce;
}

.font .sep {
  margin: 0 5px;
}

.align .sep {
  margin: 0 3px;
}

.align .wide {
  margin: 0 7px 0 18px;
}

.align .snug {
  margin: 0 5px 0 4px;
}

.labelled {
  gap: 4px;
}

.styles .body {
  padding-left: 12px;
}

.cellsgrp .body {
  padding-left: 7px;
}

.gallery {
  display: flex;
  width: 547px;
  height: 62px;
  margin: 2px 0 0 -2px;
  border: 1px solid #c8c6c4;
  background: #fff;
}

.cells {
  flex: 1;
  display: grid;
  grid-template-columns: repeat(5, 100px);
  grid-template-rows: 22px 22px;
  gap: 6px;
  padding: 5px 3px;
}

.cells button {
  justify-content: flex-start;
  padding-left: 4px;
  font-family: "Open Sans", "Noto Sans", sans-serif;
  font-size: 13px;
  color: #000;
}

.cells .serif {
  font-family: "Liberation Serif", serif;
}

.cells .picked {
  outline: 2px solid #979593;
  outline-offset: 1px;
}

.cells .bad { background: #ffc7ce; color: #9c0006; }
.cells .good { background: #c6efce; color: #006100; }
.cells .neutral { background: #ffeb9c; color: #9c5700; }

.cells .calc {
  background: #f2f2f2;
  border: 1px solid #7f7f7f;
  padding-left: 3px;
  color: #e87d1e;
  font-size: 12px;
  font-weight: 700;
}

.cells .check {
  background: #a5a5a5;
  border: 3px double #3f3f3f;
  padding-left: 1px;
  color: #fff;
  font-size: 12px;
  font-weight: 700;
}

.cells .expl {
  color: #7f7f7f;
  font-style: italic;
}

.scroll {
  display: grid;
  grid-template-rows: 20px 19px 21px;
  width: 14px;
  border-left: 1px solid #c8c6c4;
}

.scroll button {
  border-bottom: 1px solid #c8c6c4;
}

.scroll button:disabled {
  color: #b1afad;
  background: #f3f1f0;
}

.flip {
  transform: rotate(180deg);
}

.editing .body {
  padding-left: 10px;
}

.editing .stack {
  width: 90px;
  grid-template-rows: 22px 23px 24px;
}

.collapse {
  align-self: flex-end;
  margin: 0 8px 2px auto;
}

/* formula bar */
.formulabar {
  display: flex;
  align-items: flex-start;
  height: 67px;
  flex: none;
  padding: 11px 5px 0;
}

.namebox, .fxbox, .formula {
  position: relative;
  background: #fff;
  border: 1px solid #c6c6c6;
}

.namebox {
  width: 102px;
  height: 26px;
}

.namebox input {
  width: 80px;
  height: 24px;
  padding-left: 6px;
}

.namebox svg {
  position: absolute;
  right: 6px;
  top: 9px;
}

.grip {
  margin: 7px 13px 0 14px;
}

.fxbox {
  display: grid;
  grid-template-columns: repeat(3, 36px);
  width: 110px;
  height: 26px;
  margin-right: 3px;
}

.fx {
  font: italic 15px "Liberation Serif", serif;
}

.fx sub {
  font-size: 11px;
  line-height: 8px;
  vertical-align: -2px;
}

.formula {
  flex: 1;
  height: 46px;
}

.formula textarea {
  width: 98%;
  height: 100%;
  resize: none;
}

.formula svg {
  position: absolute;
  right: 4px;
  top: 8px;
}

/* worksheet */
.sheet {
  flex: 1;
  min-height: 0;
  display: flex;
}

.gridwrap {
  flex: 1;
  overflow: hidden;
  border-right: 1px solid #9b9b9b;
  margin-right: 3px;
}

/* column L runs on under the scroll bar */
.grid {
  width: calc(100% + 46px);
  table-layout: fixed;
  border-collapse: separate;
  border-spacing: 0;
  background: #fff;
}

.c-head { width: 33px; }
.c-c { width: 88px; }
.c-d { width: 607px; }
.c-e { width: 107px; }
.c-f { width: 158px; }
.c-g { width: 107px; }
.c-h { width: 86px; }
.c-i { width: 94px; }
.c-j { width: 287px; }
.c-k { width: 186px; }

.grid th {
  height: 17px;
  padding: 1px 0 0;
  background: #e6e6e6;
  border-right: 1px solid #9b9b9b;
  border-bottom: 1px solid #c6c6c6;
  color: #222;
  font-weight: 400;
  line-height: 15px;
}

.grid thead th {
  height: 21px;
  padding-top: 0;
  border-bottom: 1px solid #9b9b9b;
  border-right-color: #b5b5b5;
}

.grid thead .last {
  border-right: 0;
}

.grid .corner {
  text-align: right;
  line-height: 12px;
  padding-right: 3px;
}

.grid thead .sel {
  background: #d2d2d2;
  border-bottom: 2px solid #217346;
  color: #217346;
}

.grid tbody .sel {
  background: #d2d2d2;
  border-right: 2px solid #217346;
  color: #217346;
}

.grid td {
  padding: 0;
  border-right: 1px solid #d4d4d4;
  border-bottom: 1px solid #d4d4d4;
}

.grid td:last-child {
  border-right: 0;
}

.grid .active {
  position: relative;
}

.active span:empty {
  position: absolute;
  inset: -2px;
  border: 2px solid #217346;
}

.active span:empty::after {
  content: "";
  position: absolute;
  right: -3px;
  bottom: -3px;
  width: 6px;
  height: 6px;
  background: #217346;
  border: 1px solid #fff;
  border-width: 1px 0 0 1px;
}

.vscroll {
  display: flex;
  flex-direction: column;
  width: 14px;
  margin: 3px 4px 0 0;
  gap: 1px;
}

.vscroll button,
.hscroll button {
  width: 14px;
  height: 14px;
  flex: none;
  background: #fff;
  border: 1px solid #ababab;
}

.track {
  flex: 1;
  background: #f1f1f1;
}

.thumb {
  background: #fff;
  border: 1px solid #ababab;
}

.vscroll .thumb {
  height: 17px;
}

/* sheet tabs */
.sheetbar {
  display: flex;
  align-items: center;
  height: 28px;
  flex: none;
  border-top: 1px solid #9b9b9b;
}

.sheetnav {
  display: flex;
  gap: 24px;
  width: 100px;
  padding-left: 26px;
}

.sheets {
  display: grid;
  grid-template-columns: 40px 41px 221px 225px 65px 162px;
  height: 27px;
  align-items: center;
  font-size: 13px;
}

.sheets button {
  height: 20px;
  padding-bottom: 2px;
  border-right: 1px solid #9b9b9b;
}

.sheets .bare {
  border-right: 0;
  border-left: 1px solid #9b9b9b;
}

.sheets .current {
  align-self: start;
  height: 25px;
  margin-top: -1px;
  padding: 4px 4px 0 0;
  background: #fff;
  border-right: 1px solid #ababab;
  border-bottom: 2px solid #217346;
  color: #217346;
  font-size: 12px;
  font-weight: 700;
}

.add {
  width: 82px;
}

.sheetbar .grip {
  margin: 0 15px 0 auto;
}

.hscroll {
  display: flex;
  width: 730px;
  height: 14px;
  margin-right: 21px;
}

.hscroll .track {
  display: grid;
  grid-template-columns: 108fr 484fr 110fr;
}

.hscroll .thumb {
  grid-column: 2;
}

/* status bar */
.status {
  display: flex;
  align-items: center;
  height: 22px;
  flex: none;
  padding: 0 8px 0 7px;
  background: #f3f1f0;
  border-top: 1px solid #c8c6c4;
  font-size: 11px;
}

.ready {
  width: 48px;
}

.found {
  width: 154px;
}

.access {
  gap: 4px;
}

.views {
  display: grid;
  grid-template-columns: repeat(3, 40px);
  height: 21px;
  margin: 0 5px 0 auto;
}

.views .on {
  background: #d2d0ce;
}

.zoom {
  appearance: none;
  width: 100px;
  height: 12px;
  margin: 0 5px;
  background: linear-gradient(#666, #666) center / 100% 1px no-repeat;
}

.zoom::-webkit-slider-thumb {
  appearance: none;
  width: 5px;
  height: 12px;
  background: #444;
}

.pct {
  width: 40px;
  text-align: right;
}

/* taskbar */
.taskbar {
  display: grid;
  grid-template-columns: 1fr auto 1fr;
  align-items: center;
  height: 48px;
  flex: none;
  border-top: 1px solid #b9b3a0;
  color: #222;
  font-size: 11px;
  background: linear-gradient(90deg, #dde5b3, #e0e4bd 8%, #dcdfc6 15%, #e2e5ae 21%, #ebdfa8 25%, #e0e4b0 33%, #e6dcbf 43%, #e8d6ce 48%, #e5d6d2 54%, #dfdac6 62%, #dfe0c6 66%, #e8d6cd 70%, #eadabf 78%, #e8d5cc 87%, #ecd3e3 91%, #eed5dc 96%, #ead8bd);
}

.weather {
  justify-self: start;
  gap: 6px;
  padding: 0 0 2px 18px;
  text-align: left;
}

.weather small {
  font-size: 11px;
  color: #555;
}

.cloud {
  position: relative;
  padding-top: 4px;
  line-height: 0;
}

.badge {
  position: absolute;
  right: -2px;
  top: -6px;
  width: 16px;
  height: 16px;
  border-radius: 8px;
  background: #c42b1c;
  color: #fff;
  font-size: 11px;
  line-height: 16px;
  font-weight: 400;
  text-align: center;
}

.apps {
  display: flex;
  align-items: center;
}

.apps button {
  position: relative;
  width: 44px;
  height: 47px;
}

.badge.blue {
  right: 5px;
  top: 6px;
  background: #0b6cd0;
}

.tasksearch {
  display: flex;
  align-items: center;
  gap: 10px;
  width: 218px;
  height: 32px;
  margin: 0 3px 0 4px;
  padding: 0 8px 0 10px;
  border-radius: 16px;
  background: #fbf9ee;
  border-bottom: 1px solid #c9c3b0;
  color: #555;
  font-size: 13px;
}

.tasksearch input {
  flex: 1;
  width: 0;
}

.run::after {
  content: "";
  position: absolute;
  bottom: 4px;
  width: 6px;
  height: 3px;
  border-radius: 2px;
  background: #8a847e;
}

.apps .focus {
  width: 38px;
  height: 40px;
  margin: 0 3px;
  border-radius: 4px;
  background: #f4f1e4;
}

.focus::after {
  bottom: 0;
  width: 16px;
  background: #0067c0;
}

.tray {
  display: flex;
  justify-content: flex-end;
  align-items: center;
  padding-right: 18px;
  gap: 8px;
}

.tray button:first-child {
  margin-right: 10px;
}

.tray .clock {
  margin-left: 6px;
  padding-bottom: 2px;
  font-size: 12px;
  text-align: right;
}
```
